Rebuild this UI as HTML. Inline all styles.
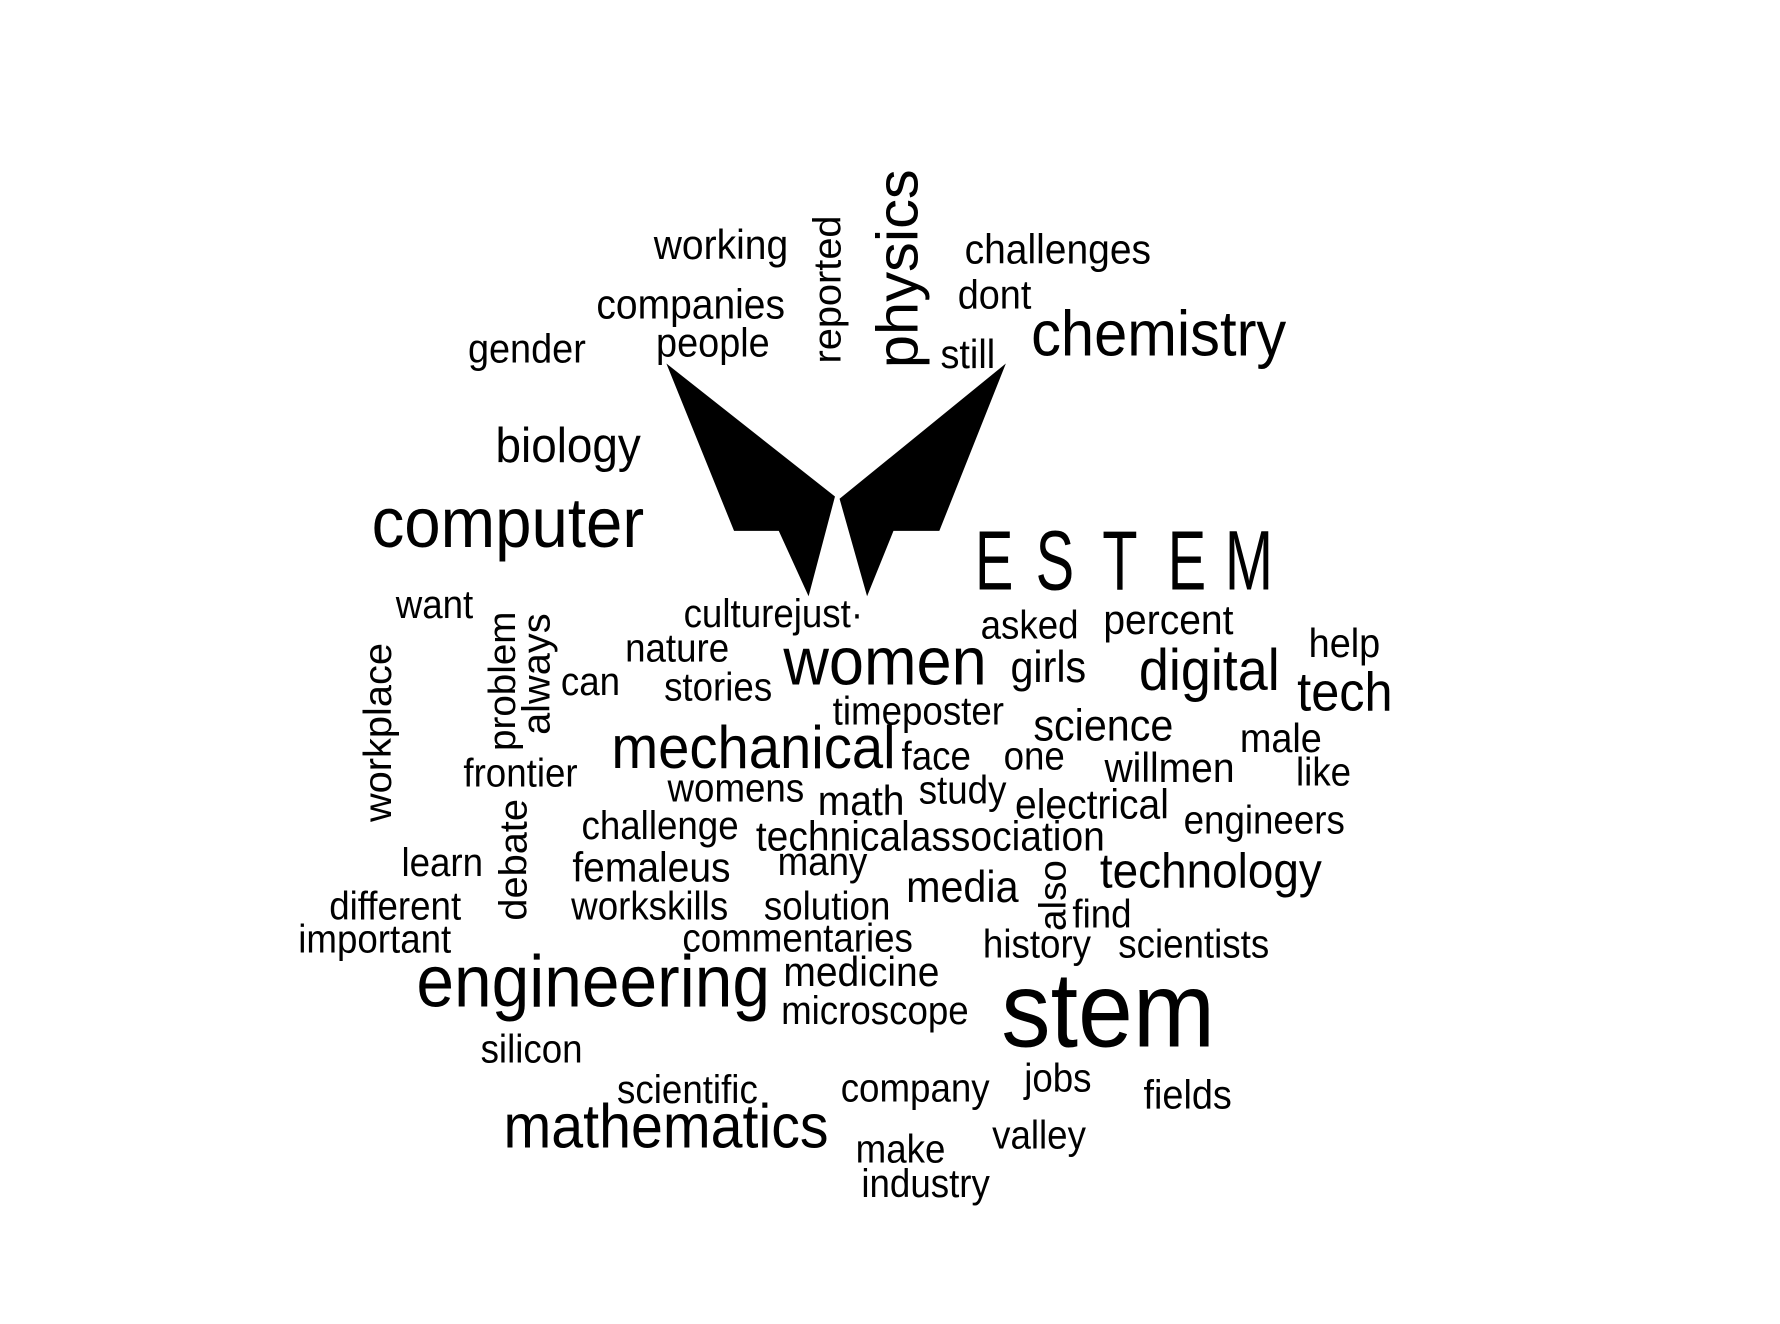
<!DOCTYPE html>
<html><head><meta charset="utf-8"><style>
html,body{margin:0;padding:0;background:#fff;width:1780px;height:1324px;overflow:hidden}
#c{position:absolute;left:-8px;top:-1px;width:1552px;height:1155px;transform:scale(1.1469,1.1463);transform-origin:0 0}
#c span{position:absolute;font-family:"Liberation Sans",Arial,sans-serif;line-height:1;white-space:nowrap;color:#000;transform:scale(1.0,1.08);transform-origin:0 85%}
#c span.v{transform:rotate(-90deg) scale(1.02,1.0);transform-origin:0 0}
#c span.e{transform:scale(0.72,1.05);transform-origin:0 85%}
</style></head><body><div id="c">
<svg width="1552" height="1155" style="position:absolute;left:0;top:0">
<polygon points="588,318 735,434 712,521 686,464 647,464" fill="#000"/>
<polygon points="884,318 739,436 763,521 786,464 826,464" fill="#000"/>
</svg>
<span style="left:577px;top:199px;font-size:34px">working</span>
<span style="left:527px;top:251px;font-size:34px">companies</span>
<span style="left:579px;top:284px;font-size:33px">people</span>
<span style="left:415px;top:289px;font-size:33px">gender</span>
<span class="v" style="left:712px;top:318px;font-size:34px">reported</span>
<span class="v" style="left:764px;top:322px;font-size:51px">physics</span>
<span style="left:848px;top:203px;font-size:34px">challenges</span>
<span style="left:842px;top:242px;font-size:33px">dont</span>
<span style="left:906px;top:268px;font-size:52px">chemistry</span>
<span style="left:827px;top:294px;font-size:33px">still</span>
<span style="left:439px;top:371px;font-size:40px">biology</span>
<span style="left:331px;top:431px;font-size:57px">computer</span>
<span class="e" style="left:857px;top:456px;font-size:70px">E</span>
<span class="e" style="left:910px;top:456px;font-size:70px">S</span>
<span class="e" style="left:968px;top:456px;font-size:70px">T</span>
<span class="e" style="left:1025px;top:456px;font-size:70px">E</span>
<span class="e" style="left:1075px;top:456px;font-size:70px">M</span>
<span style="left:352px;top:513px;font-size:32px">want</span>
<span class="v" style="left:320px;top:718px;font-size:34px">workplace</span>
<span class="v" style="left:428px;top:656px;font-size:33px">problem</span>
<span class="v" style="left:458px;top:642px;font-size:34px">always</span>
<span style="left:603px;top:521px;font-size:32px">culturejust·</span>
<span style="left:552px;top:551px;font-size:32px">nature</span>
<span style="left:496px;top:580px;font-size:32px">can</span>
<span style="left:586px;top:585px;font-size:32px">stories</span>
<span style="left:690px;top:552px;font-size:55px">women</span>
<span style="left:862px;top:531px;font-size:32px">asked</span>
<span style="left:969px;top:526px;font-size:34px">percent</span>
<span style="left:888px;top:566px;font-size:36px">girls</span>
<span style="left:1000px;top:563px;font-size:47px">digital</span>
<span style="left:1148px;top:546px;font-size:33px">help</span>
<span style="left:1138px;top:585px;font-size:44px">tech</span>
<span style="left:733px;top:606px;font-size:32px">timeposter</span>
<span style="left:908px;top:617px;font-size:36px">science</span>
<span style="left:1088px;top:629px;font-size:33px">male</span>
<span style="left:1137px;top:659px;font-size:32px">like</span>
<span style="left:540px;top:631px;font-size:49px">mechanical</span>
<span style="left:793px;top:645px;font-size:32px">face</span>
<span style="left:882px;top:645px;font-size:32px">one</span>
<span style="left:970px;top:655px;font-size:34px">willmen</span>
<span style="left:411px;top:660px;font-size:32px">frontier</span>
<span style="left:589px;top:673px;font-size:32px">womens</span>
<span style="left:720px;top:684px;font-size:34px">math</span>
<span style="left:808px;top:675px;font-size:32px">study</span>
<span style="left:892px;top:687px;font-size:34px">electrical</span>
<span style="left:1039px;top:701px;font-size:32px">engineers</span>
<span style="left:514px;top:706px;font-size:32px">challenge</span>
<span style="left:666px;top:715px;font-size:34px">technicalassociation</span>
<span class="v" style="left:438px;top:804px;font-size:34px">debate</span>
<span style="left:357px;top:738px;font-size:32px">learn</span>
<span style="left:506px;top:742px;font-size:34px">femaleus</span>
<span style="left:685px;top:737px;font-size:32px">many</span>
<span style="left:797px;top:758px;font-size:36px">media</span>
<span class="v" style="left:908px;top:813px;font-size:33px">also</span>
<span style="left:966px;top:742px;font-size:40px">technology</span>
<span style="left:942px;top:783px;font-size:32px">find</span>
<span style="left:294px;top:776px;font-size:32px">different</span>
<span style="left:505px;top:776px;font-size:32px">workskills</span>
<span style="left:673px;top:776px;font-size:32px">solution</span>
<span style="left:267px;top:805px;font-size:32px">important</span>
<span style="left:602px;top:804px;font-size:32px">commentaries</span>
<span style="left:864px;top:809px;font-size:32px">history</span>
<span style="left:982px;top:809px;font-size:32px">scientists</span>
<span style="left:370px;top:830px;font-size:59px">engineering</span>
<span style="left:690px;top:833px;font-size:34px">medicine</span>
<span style="left:688px;top:867px;font-size:32px">microscope</span>
<span style="left:880px;top:842px;font-size:86px">stem</span>
<span style="left:426px;top:901px;font-size:32px">silicon</span>
<span style="left:545px;top:936px;font-size:32px">scientific</span>
<span style="left:740px;top:935px;font-size:32px">company</span>
<span style="left:900px;top:926px;font-size:32px">jobs</span>
<span style="left:1004px;top:940px;font-size:33px">fields</span>
<span style="left:446px;top:960px;font-size:50px">mathematics</span>
<span style="left:753px;top:988px;font-size:32px">make</span>
<span style="left:872px;top:976px;font-size:32px">valley</span>
<span style="left:758px;top:1018px;font-size:32px">industry</span>
</div></body></html>
